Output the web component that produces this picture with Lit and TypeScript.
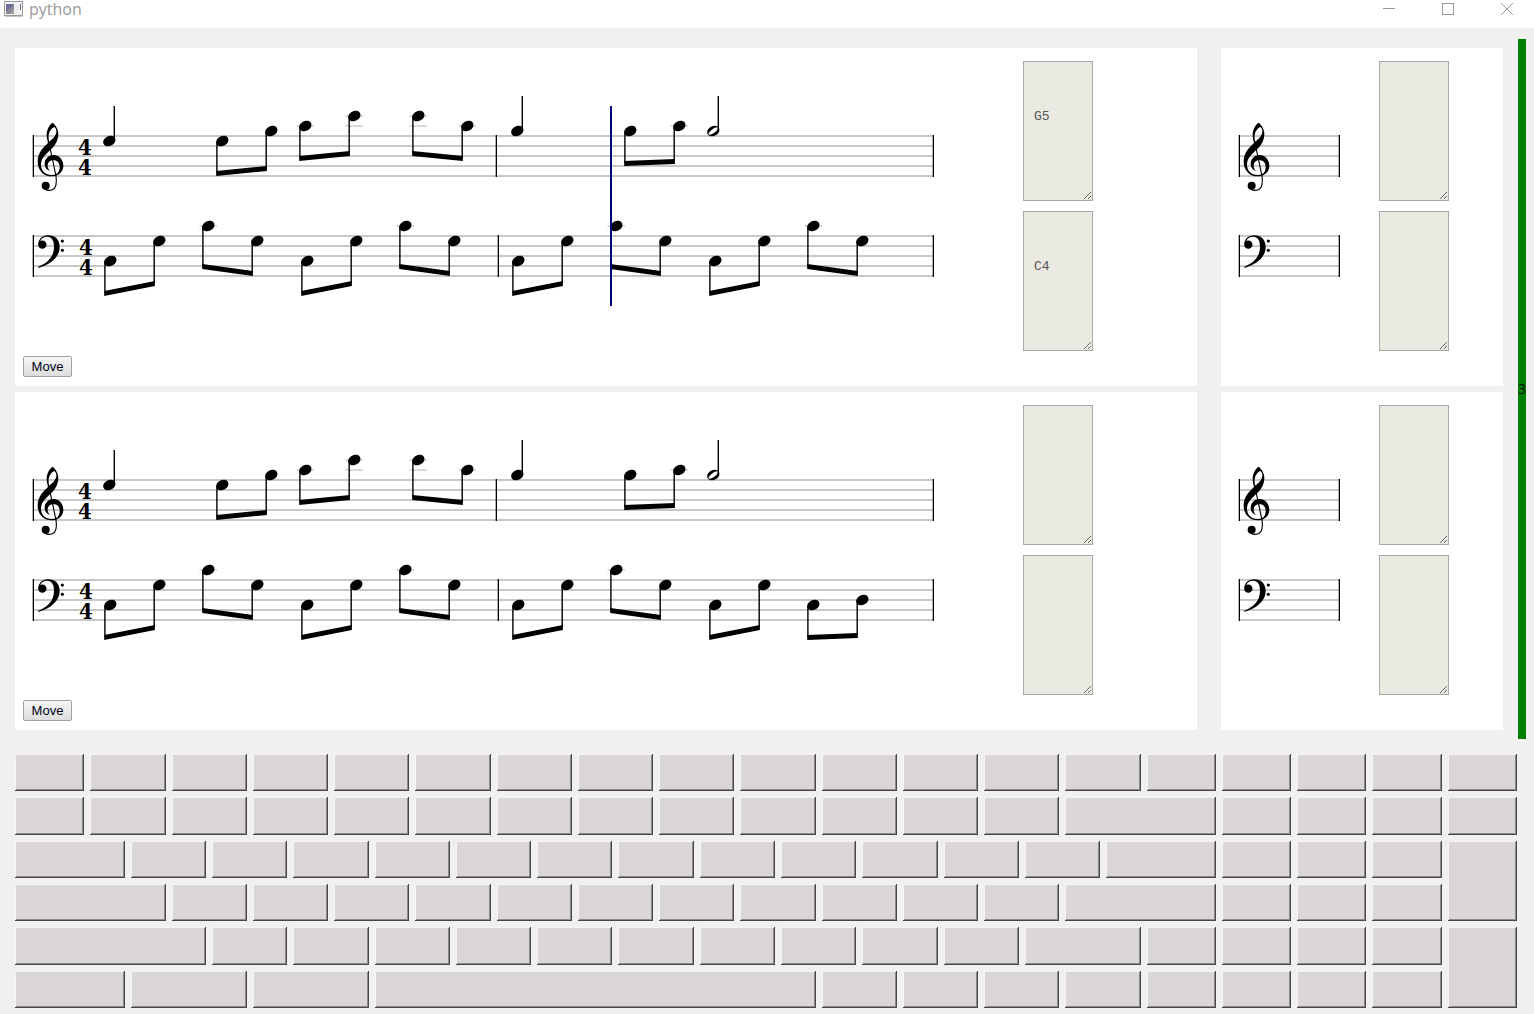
import { LitElement, html, svg, css } from "lit";
import { customElement, property } from "lit/decorators.js";

interface Note {
  x: number;
  y: number;
}

interface Beam {
  notes: [Note, Note];
  /** y of the beam's upper edge at its left and right end */
  top: [number, number];
}

interface Single extends Note {
  half?: boolean;
}

interface Staff {
  clef: "treble" | "bass";
  top: number;
  bars: number[];
  meterX?: number;
  singles: Single[];
  beams: Beam[];
}

const pair = (x: number, y1: number, y2: number, t1: number, t2: number): Beam => ({
  notes: [
    { x, y: y1 },
    { x: x + 49, y: y2 },
  ],
  top: [t1, t2],
});

const rising = (x: number) => pair(x, 200, 180, 230, 220);
const falling = (x: number) => pair(x, 165, 180, 203, 210);

const melody: Staff = {
  clef: "treble",
  top: 75,
  bars: [10, 473, 910],
  meterX: 62,
  singles: [
    { x: 86, y: 80 },
    { x: 494, y: 70 },
    { x: 690, y: 70, half: true },
  ],
  beams: [
    pair(199, 80, 70, 110, 105),
    pair(282, 65, 55, 95, 90),
    pair(395, 55, 65, 90, 95),
    pair(607, 70, 65, 100, 98),
  ],
};

const accompaniment = (last: Beam): Staff => ({
  clef: "bass",
  top: 175,
  bars: [10, 475, 910],
  meterX: 63,
  singles: [],
  beams: [
    rising(87),
    falling(185),
    rising(284),
    falling(382),
    rising(495),
    falling(593),
    rising(692),
    last,
  ],
});

const emptyStaves: Staff[] = [
  { clef: "treble", top: 75, bars: [10, 110], singles: [], beams: [] },
  { clef: "bass", top: 175, bars: [10, 110], singles: [], beams: [] },
];

const scores: Staff[][] = [
  [melody, accompaniment(falling(790))],
  [melody, accompaniment(pair(790, 200, 195, 230, 228))],
];

@customElement("music-score")
export class MusicScore extends LitElement {
  @property({ attribute: false }) staves: Staff[] = [];
  @property({ type: Number }) length = 1000;
  @property({ type: Number }) cursor = -1;

  static styles = css`
    :host {
      display: block;
    }
    .sheet {
      display: block;
    }
    .line {
      fill: #c8c8c8;
    }
    .ledger {
      stroke: #c8c8c8;
      stroke-width: 1.4;
    }
    .stem {
      stroke: #000;
      stroke-width: 1.4;
    }
    .thin {
      fill: none;
      stroke: #000;
      stroke-width: 3.4;
    }
    .slit {
      fill: #fff;
    }
    .meter {
      font: bold 22px "DejaVu Serif Condensed", "Liberation Serif", serif;
      text-anchor: middle;
    }
    .cursor {
      fill: #000080;
    }
  `;

  private clef(s: Staff) {
    return s.clef === "treble"
      ? svg`<g transform="translate(5 ${s.top - 18}) scale(0.3333)">
          <path fill-rule="evenodd" d="M73 14 C64 22 56 34 56 51 C56 59 58 66 60 75 C46 88 29 104 29 131 C29 158 48 175 71 175 C92 175 106 161 106 143 C106 125 93 111 76 111 C61 111 50 124 50 138 C50 148 57 156 66 159 C61 154 59 149 59 143 C59 133 66 127 76 127 C88 127 95 134 95 147 C95 162 87 171 71 171 C51 171 39 159 39 139 C39 121 54 108 70 93 C83 80 91 66 91 47 C91 34 83 20 73 14 Z M79 27 C84 31 86 37 85 43 C83 55 74 63 64 71 C62 64 61 57 62 51 C63 40 70 31 79 27 Z"/>
          <path class="thin" d="M62 70 L84 174 C86 190 88 217 64 217 C56 217 48 214 44 207"/>
          <circle cx="53" cy="203" r="12"/>
        </g>`
      : svg`<g transform="translate(5 ${s.top - 6}) scale(0.3333)">
          <path d="M31 44 C31 27 43 16 60 16 C82 16 95 29 95 51 C95 80 70 102 31 114 L31 110 C60 98 78 80 78 50 C78 31 71 20 58 20 C47 20 39 25 36 35 Z"/>
          <circle cx="43" cy="44" r="12.5"/>
          <circle cx="103" cy="33" r="4.8"/>
          <circle cx="103" cy="61" r="4.8"/>
        </g>`;
  }

  private head(n: Single, staffTop: number) {
    const ledgers: number[] = [];
    for (let y = staffTop - 10; y >= n.y; y -= 10) ledgers.push(y);
    return svg`
      ${ledgers.map((y) => svg`<line class="ledger" x1=${n.x - 8.5} x2=${n.x + 9} y1=${y} y2=${y}/>`)}
      <g transform="translate(${n.x + 0.3} ${n.y}) rotate(-28)">
        <ellipse rx="6.5" ry="4.9"/>
        ${n.half ? svg`<ellipse class="slit" rx="5.6" ry="2" transform="rotate(-8)"/>` : ""}
      </g>`;
  }

  private single(n: Single, staffTop: number) {
    return svg`${this.head(n, staffTop)}
      <line class="stem" x1=${n.x + 5.3} x2=${n.x + 5.3} y1=${n.y - 1} y2=${n.y - 35}/>`;
  }

  private beam(b: Beam, staffTop: number) {
    const [a, z] = b.notes;
    const [ta, tz] = b.top;
    const xa = a.x - 5.1;
    const xz = z.x - 4.8;
    return svg`
      ${this.head(a, staffTop)}${this.head(z, staffTop)}
      <line class="stem" x1=${xa} x2=${xa} y1=${a.y + 1} y2=${ta + 2}/>
      <line class="stem" x1=${xz} x2=${xz} y1=${z.y + 1} y2=${tz + 2}/>
      <polygon points="${xa - 0.7},${ta} ${xz + 0.7},${tz} ${xz + 0.7},${tz + 5} ${xa - 0.7},${ta + 5}"/>`;
  }

  private staff(s: Staff) {
    const start = s.bars[0];
    const end = s.bars[s.bars.length - 1];
    return svg`
      ${[0, 10, 20, 30, 40].map(
        (d) => svg`<rect class="line" x=${start} y=${s.top + d - 1} width=${end - start + 1} height="2"/>`
      )}
      ${s.bars.map((x) => svg`<rect x=${x - 0.3} y=${s.top - 1} width="1.3" height="42"/>`)}
      ${this.clef(s)}
      ${s.meterX === undefined
        ? ""
        : svg`<text class="meter" x=${s.meterX} y=${s.top + 19}>4</text>
            <text class="meter" x=${s.meterX} y=${s.top + 39}>4</text>`}
      ${s.singles.map((n) => this.single(n, s.top))}
      ${s.beams.map((b) => this.beam(b, s.top))}`;
  }

  render() {
    return html`<svg class="sheet" width=${this.length} height="290" viewBox="0 0 ${this.length} 290">
      ${this.staves.map((s) => this.staff(s))}
      ${this.cursor < 0 ? "" : svg`<rect class="cursor" x=${this.cursor} y="45" width="2" height="200"/>`}
    </svg>`;
  }
}

@customElement("score-panel")
export class ScorePanel extends LitElement {
  @property({ attribute: false }) staves: Staff[] = [];
  @property({ attribute: false }) notes: [string, string] = ["", ""];
  @property({ type: Number }) length = 1000;
  @property({ type: Number }) cursor = -1;
  @property({ type: Boolean }) movable = false;

  static styles = css`
    :host {
      display: flex;
      flex-direction: column;
      align-items: flex-start;
      gap: 5px;
      box-sizing: border-box;
      padding: 13px 8px 9px;
      background: #fff;
      min-width: 0;
      overflow: hidden;
    }
    .row {
      display: flex;
    }
    .fields {
      display: flex;
      flex-direction: column;
      gap: 10px;
    }
    .field {
      box-sizing: border-box;
      width: 70px;
      height: 140px;
      margin: 0;
      padding: 47px 10px 0;
      border: 1px solid #a9a9a9;
      border-radius: 0;
      background: #eaeae2;
      color: #545454;
      font: 13px/15px "Liberation Mono", monospace;
      resize: both;
      overflow: hidden;
    }
    .move {
      width: 49px;
      height: 21px;
      padding: 0;
      border: 1px solid #a0a0a0;
      border-radius: 2px;
      background: linear-gradient(#f6f6f6, #dddddd);
      color: #000018;
      font: 13px/19px "Liberation Sans", Arial, sans-serif;
    }
  `;

  render() {
    return html`
      <div class="row">
        <music-score .staves=${this.staves} .length=${this.length} .cursor=${this.cursor}></music-score>
        <div class="fields">
          <textarea class="field" aria-label="Treble note" disabled .value=${this.notes[0]}></textarea>
          <textarea class="field" aria-label="Bass note" disabled .value=${this.notes[1]}></textarea>
        </div>
      </div>
      ${this.movable ? html`<button class="move" type="button">Move</button>` : ""}
    `;
  }
}

/** Column span of every key, row by row; a trailing "t" marks a key two rows tall. */
const keyRows: string[] = [
  "1 2 2 2 2 2 2 2 2 2 2 2 2 2 1 1 1 1 1",
  "1 2 2 2 2 2 2 2 2 2 2 2 2 3 1 1 1 1",
  "2 2 2 2 2 2 2 2 2 2 2 2 2 2 1 1 1 1t",
  "3 2 2 2 2 2 2 2 2 2 2 2 3 1 1 1",
  "4 2 2 2 2 2 2 2 2 2 2 3 1 1 1 1 1t",
  "2 3 3 11 2 2 2 2 1 1 1 1",
];

@customElement("key-board")
export class KeyBoard extends LitElement {
  static styles = css`
    :host {
      display: grid;
      grid-template-columns: 2fr repeat(26, 1fr) repeat(5, 2fr);
      grid-auto-rows: minmax(36px, 1fr);
      gap: 6px;
      padding: 15px 17px 6px 15px;
    }
    .key {
      min-width: 0;
      padding: 0;
      border: 0;
      border-radius: 0;
      background: #dad6d5;
      box-shadow:
        inset -1px -1px #484646,
        inset 1px 1px #f8f6f5,
        inset -2px -2px #8e8a8a;
    }
    .w2 {
      grid-column-end: span 2;
    }
    .w3 {
      grid-column-end: span 3;
    }
    .w4 {
      grid-column-end: span 4;
    }
    .w11 {
      grid-column-end: span 11;
    }
    .tall {
      grid-row-end: span 2;
    }
  `;

  render() {
    return keyRows.map((row, r) =>
      row.split(" ").map(
        (k, i) => html`<button
          class="key w${parseInt(k)} ${k.endsWith("t") ? "tall" : ""}"
          type="button"
          aria-label="Key ${r + 1}-${i + 1}"
        ></button>`
      )
    );
  }
}

@customElement("app-root")
export class AppRoot extends LitElement {
  static styles = css`
    :host {
      display: flex;
      flex-direction: column;
      min-height: 100vh;
      background: #f0f0f0;
      font-family: "Open Sans", "Noto Sans", sans-serif;
    }
    .titlebar {
      display: flex;
      align-items: center;
      gap: 6px;
      height: 18px;
      padding: 0 0 10px 4px;
      background: #fff;
      color: #999;
    }
    .title {
      flex: 1;
      font-size: 16px;
      line-height: 18px;
      font-weight: 400;
      margin: 0;
    }
    .controls {
      display: flex;
      gap: 5px;
    }
    .control {
      display: flex;
      justify-content: center;
      align-items: center;
      width: 54px;
      height: 18px;
      padding: 0;
      border: 0;
      background: none;
    }
    .glyph {
      display: block;
      fill: none;
      stroke: #999;
    }
    .main {
      display: flex;
      gap: 15px;
      padding: 11px 8px 0 15px;
    }
    .scores {
      flex: 1;
      min-width: 0;
      display: grid;
      grid-template-columns: minmax(0, 1fr) 282px;
      gap: 6px 24px;
      padding: 9px 0;
    }
    .level {
      display: flex;
      align-items: center;
      justify-content: center;
      width: 8px;
      background: #008000;
      color: #001000;
      font-size: 14px;
      line-height: 18px;
    }
    .keys {
      flex: 1;
    }
  `;

  render() {
    return html`
      <header class="titlebar">
        <svg width="19" height="16" viewBox="0 0 19 16">
          <rect x="0.5" y="0.5" width="18" height="14" fill="#f4f4f4" stroke="#999" />
          <rect x="2" y="3" width="8" height="10" fill="#8b8b93" />
          <path d="M2 3h8l-7 7H2z" fill="#6c6f9c" />
          <path d="M6 13l4-5v5z" fill="#a4a4a4" />
          <rect x="11" y="3" width="3" height="10" fill="#e9eef2" />
          <rect x="16" y="3" width="1" height="6" fill="#6c6c8c" />
          <path d="M1 15.5h18" stroke="#c8c8c0" />
        </svg>
        <h1 class="title">python</h1>
        <div class="controls">
          <button class="control" type="button" aria-label="Minimize">
            <svg class="glyph" width="12" height="12"><path d="M0 5.5h12" /></svg>
          </button>
          <button class="control" type="button" aria-label="Maximize">
            <svg class="glyph" width="12" height="12"><rect x="0.5" y="0.5" width="11" height="11" /></svg>
          </button>
          <button class="control" type="button" aria-label="Close">
            <svg class="glyph" width="12" height="12"><path d="M0 0l12 12M12 0l-12 12" /></svg>
          </button>
        </div>
      </header>
      <main class="main">
        <div class="scores">
          ${scores.map(
            (staves, i) => html`
              <score-panel
                movable
                .staves=${staves}
                .cursor=${i === 0 ? 587 : -1}
                .notes=${i === 0 ? ["G5", "C4"] : ["", ""]}
              ></score-panel>
              <score-panel .staves=${emptyStaves} .length=${150}></score-panel>
            `
          )}
        </div>
        <div class="level">3</div>
      </main>
      <key-board class="keys"></key-board>
    `;
  }
}
